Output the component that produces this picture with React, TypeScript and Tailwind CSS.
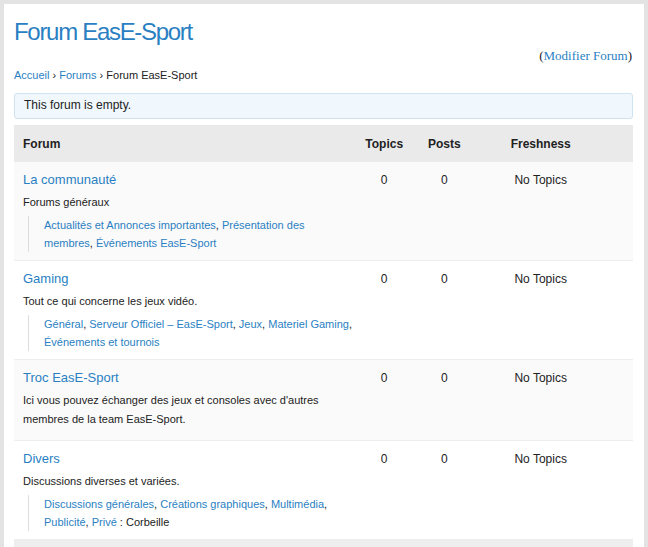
import React from 'react';

type Forum = {
  title: string;
  desc: string[];
  subs?: string[];
  topics: number;
  posts: number;
};

const forums: Forum[] = [
  {
    title: 'La communauté',
    desc: ['Forums généraux'],
    subs: ['Actualités et Annonces importantes', 'Présentation des membres', 'Événements EasE-Sport'],
    topics: 0,
    posts: 0,
  },
  {
    title: 'Gaming',
    desc: ['Tout ce qui concerne les jeux vidéo.'],
    subs: ['Général', 'Serveur Officiel – EasE-Sport', 'Jeux', 'Materiel Gaming', 'Événements et tournois'],
    topics: 0,
    posts: 0,
  },
  {
    title: 'Troc EasE-Sport',
    desc: ["Ici vous pouvez échanger des jeux et consoles avec d'autres membres de la team EasE-Sport."],
    topics: 0,
    posts: 0,
  },
  {
    title: 'Divers',
    desc: ['Discussions diverses et variées.'],
    subs: ['Discussions générales', 'Créations graphiques', 'Multimédia', 'Publicité', 'Privé : Corbeille'],
    topics: 0,
    posts: 0,
  },
];

const App = () => {
  return (
    <div className="min-h-[547px] bg-[#e3e3e3] pt-[4px] pl-[4px] pr-[4px] font-['Liberation_Sans',Arial,sans-serif] text-[#222]">
      <div className="bg-white px-[10px] pr-[11px] pt-[13px] h-[543px] overflow-hidden">
        <h1 className="text-[24px] leading-[30px] text-[#2a7fc2] tracking-[-1.3px]">Forum EasE-Sport</h1>

        <div className="text-right font-['Liberation_Serif',serif] text-[13px] leading-[16px] mt-[1px] pr-[1px] text-[#222]">
          (<a className="text-[#2a7fc2]">Modifier Forum</a>)
        </div>

        <div className="text-[11px] leading-[18px] mt-[2px] text-[#222]">
          <a className="text-[#2a7fc2]">Accueil</a> › <a className="text-[#2a7fc2]">Forums</a> › Forum EasE-Sport
        </div>

        <div className="mt-[9px] border border-[#cfe2f0] bg-[#f0f7fd] rounded-[3px] px-[9px] pt-[2px] pb-[4px] text-[12px] leading-[18px]">
          This forum is empty.
        </div>

        <div className="mt-[6px]">
          <div className="bg-[#eaeaea] h-[37px] flex items-center pl-[9px] pr-[8px] text-[12px] font-bold text-[#222]">
            <div className="w-[55%]">Forum</div>
            <div className="w-[10%] text-center">Topics</div>
            <div className="w-[10%] text-center">Posts</div>
            <div className="w-[22%] text-center">Freshness</div>
          </div>

          {forums.map((f, i) => (
            <div
              key={f.title}
              className={`flex pl-[9px] pr-[8px] pt-[9px] pb-[8px] border-b border-[#eeeeee] ${i % 2 === 0 ? 'bg-[#fafafa]' : 'bg-white'}`}
            >
              <div className="w-[55%]">
                <a className="block text-[13px] leading-[18px] text-[#2a7fc2]">{f.title}</a>
                <div className={`mt-[4px] text-[11px] leading-[19px] ${f.subs ? 'mb-[4px]' : 'mb-[3px]'}`}>
                  {f.desc.map((d) => (
                    <p key={d}>{d}</p>
                  ))}
                </div>
                {f.subs && (
                  <div className="ml-[5px] border-l border-[#dddddd] pl-[15px] text-[11px] leading-[18px]">
                    {f.subs.map((s, j) => {
                      const parts = s.split(' : ');
                      return (
                        <span key={s}>
                          {parts.length > 1 ? (
                            <>
                              <a className="text-[#2a7fc2]">{parts[0]}</a> : {parts[1]}
                            </>
                          ) : (
                            <a className="text-[#2a7fc2]">{s}</a>
                          )}
                          {j < f.subs!.length - 1 ? ', ' : ''}
                        </span>
                      );
                    })}
                  </div>
                )}
              </div>
              <div className="w-[10%] text-center text-[12px] leading-[18px]">{f.topics}</div>
              <div className="w-[10%] text-center text-[12px] leading-[18px]">{f.posts}</div>
              <div className="w-[22%] text-center text-[12px] leading-[18px]">No Topics</div>
            </div>
          ))}

          <div className="bg-[#eeeeee] h-[20px]" />
        </div>
      </div>
    </div>
  );
};

export default App;
